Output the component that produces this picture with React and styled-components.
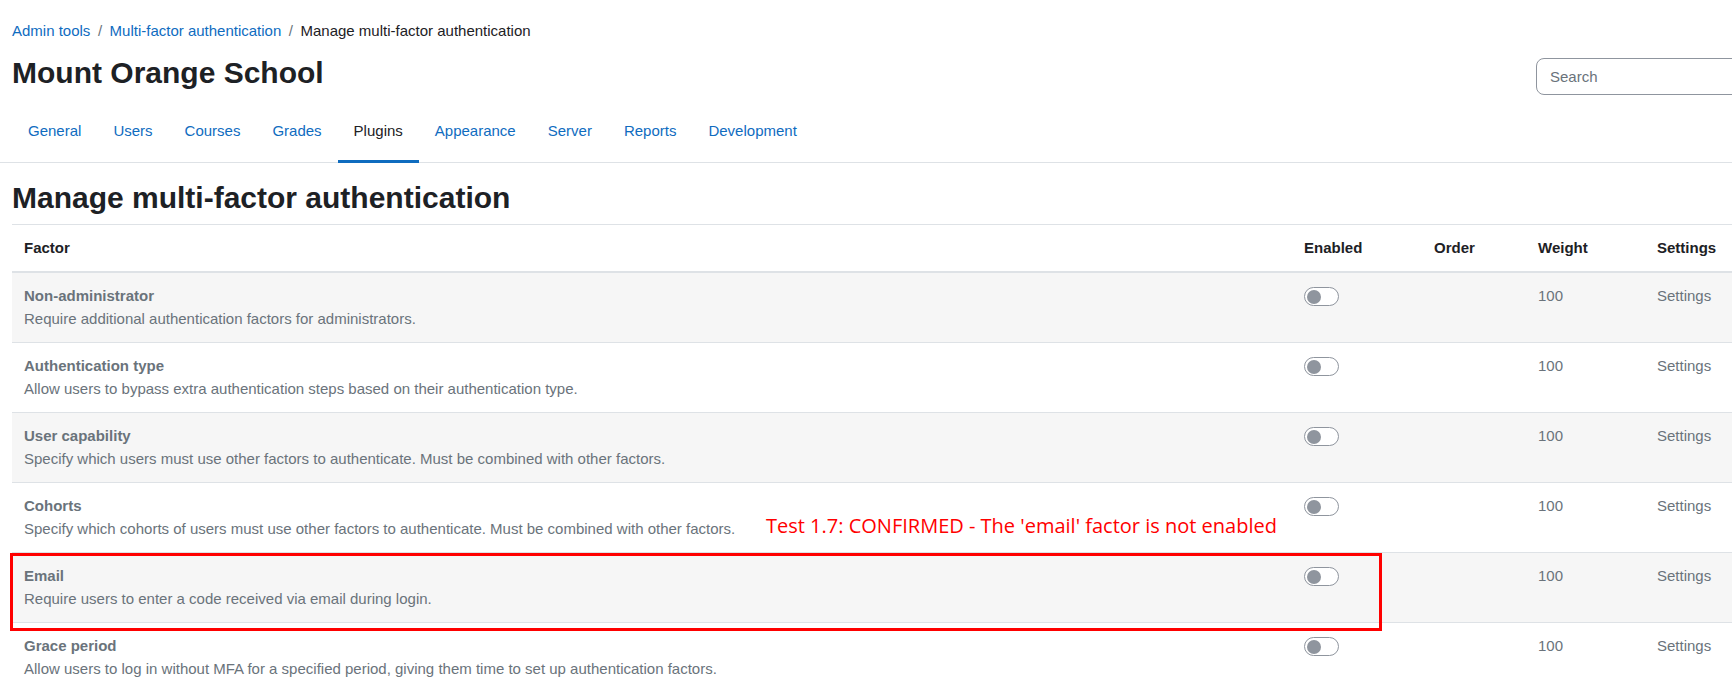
import React from 'react';
import styled, { createGlobalStyle } from 'styled-components';

const GlobalStyle = createGlobalStyle`
  html, body {
    margin: 0;
    padding: 0;
    background: #ffffff;
    overflow: hidden;
  }
  body {
    font-family: "Liberation Sans", Arial, sans-serif;
    font-size: 15px;
    line-height: 1.5;
    color: #1d2125;
  }
  * { box-sizing: border-box; }
`;

const Page = styled.div`
  position: relative;
  width: 1780px;
`;

const Header = styled.header`
  padding: 20px 12px 0;
`;

const Breadcrumb = styled.ol`
  display: flex;
  list-style: none;
  margin: 0;
  padding: 0;
  line-height: 22.5px;
`;

const Crumb = styled.li`
  color: ${(p) => (p.$current ? '#1d2125' : '#0f6cbf')};
  &:not(:first-child)::before {
    content: '/';
    color: #6a737b;
    padding: 0 7.5px;
  }
`;

const TitleRow = styled.div`
  display: flex;
  align-items: center;
  justify-content: space-between;
  margin-top: 12.5px;
  height: 36px;
`;

const SiteTitle = styled.h1`
  margin: 0;
  font-size: 30px;
  font-weight: 700;
  line-height: 36px;
`;

const SearchBox = styled.input`
  width: 232px;
  height: 37px;
  margin-top: 7px;
  border: 1px solid #8f959e;
  border-radius: 8px;
  padding: 0 13px;
  font-family: inherit;
  font-size: 15px;
  color: #1d2125;
  &::placeholder { color: #6a737b; }
`;

const Nav = styled.nav`
  display: flex;
  margin-top: 9px;
  padding: 0 12px;
  border-bottom: 1px solid #dee2e6;
`;

const Tab = styled.a`
  display: block;
  padding: 20px 16px 17px;
  margin-bottom: -1px;
  line-height: 22.5px;
  color: ${(p) => (p.$active ? '#1d2125' : '#0f6cbf')};
  border-bottom: 3px solid ${(p) => (p.$active ? '#0f6cbf' : 'transparent')};
  text-decoration: none;
`;

const Main = styled.main`
  padding: 17px 12px 0;
`;

const PageTitle = styled.h2`
  margin: 0 0 8px;
  font-size: 30px;
  font-weight: 700;
  line-height: 36px;
`;

const Table = styled.table`
  width: 1756px;
  table-layout: fixed;
  border-collapse: collapse;
  border-top: 1px solid #dee2e6;
`;

const Th = styled.th`
  text-align: left;
  font-weight: 700;
  padding: 12px;
  line-height: 22.5px;
  border-bottom: 2px solid #dee2e6;
`;

const Row = styled.tr`
  background: ${(p) => (p.$striped ? '#f6f6f6' : '#ffffff')};
  border-bottom: 1px solid #dee2e6;
`;

const Td = styled.td`
  vertical-align: top;
  padding: 12px;
  line-height: 22.5px;
  color: #6a737b;
`;

const FactorName = styled.div`
  font-weight: 700;
`;

const Switch = styled.span`
  display: block;
  width: 35px;
  height: 19px;
  margin-top: 2px;
  border: 1px solid #8f959e;
  border-radius: 10px;
  background: #ffffff;
  position: relative;
  &::after {
    content: '';
    position: absolute;
    left: 2px;
    top: 1.5px;
    width: 14px;
    height: 14px;
    border-radius: 50%;
    background: #8f959e;
  }
`;

const Note = styled.div`
  position: absolute;
  left: 766px;
  top: 512px;
  font-family: "Open Sans", "DejaVu Sans", sans-serif;
  font-size: 20px;
  line-height: 28px;
  color: #ff0000;
  white-space: nowrap;
`;

const Highlight = styled.div`
  position: absolute;
  left: 10px;
  top: 553px;
  width: 1372px;
  height: 78px;
  border: 3px solid #ff0000;
  pointer-events: none;
`;

const crumbs = ['Admin tools', 'Multi-factor authentication', 'Manage multi-factor authentication'];
const tabs = ['General', 'Users', 'Courses', 'Grades', 'Plugins', 'Appearance', 'Server', 'Reports', 'Development'];

const factors = [
  ['Non-administrator', 'Require additional authentication factors for administrators.'],
  ['Authentication type', 'Allow users to bypass extra authentication steps based on their authentication type.'],
  ['User capability', 'Specify which users must use other factors to authenticate. Must be combined with other factors.'],
  ['Cohorts', 'Specify which cohorts of users must use other factors to authenticate. Must be combined with other factors.'],
  ['Email', 'Require users to enter a code received via email during login.'],
  ['Grace period', 'Allow users to log in without MFA for a specified period, giving them time to set up authentication factors.'],
];

export default function App() {
  return (
    <Page>
      <GlobalStyle />
      <Header>
        <Breadcrumb>
          {crumbs.map((c, i) => (
            <Crumb key={c} $current={i === crumbs.length - 1}>{c}</Crumb>
          ))}
        </Breadcrumb>
        <TitleRow>
          <SiteTitle>Mount Orange School</SiteTitle>
          <SearchBox placeholder="Search" />
        </TitleRow>
      </Header>
      <Nav>
        {tabs.map((t) => (
          <Tab key={t} $active={t === 'Plugins'}>{t}</Tab>
        ))}
      </Nav>
      <Main>
        <PageTitle>Manage multi-factor authentication</PageTitle>
        <Table>
          <colgroup>
            <col style={{ width: 1280 }} />
            <col style={{ width: 130 }} />
            <col style={{ width: 104 }} />
            <col style={{ width: 119 }} />
            <col style={{ width: 123 }} />
          </colgroup>
          <thead>
            <tr>
              <Th>Factor</Th>
              <Th>Enabled</Th>
              <Th>Order</Th>
              <Th>Weight</Th>
              <Th>Settings</Th>
            </tr>
          </thead>
          <tbody>
            {factors.map(([name, desc], i) => (
              <Row key={name} $striped={i % 2 === 0}>
                <Td>
                  <FactorName>{name}</FactorName>
                  <div>{desc}</div>
                </Td>
                <Td><Switch /></Td>
                <Td />
                <Td>100</Td>
                <Td>Settings</Td>
              </Row>
            ))}
          </tbody>
        </Table>
      </Main>
      <Note>Test 1.7: CONFIRMED - The 'email' factor is not enabled</Note>
      <Highlight />
    </Page>
  );
}
